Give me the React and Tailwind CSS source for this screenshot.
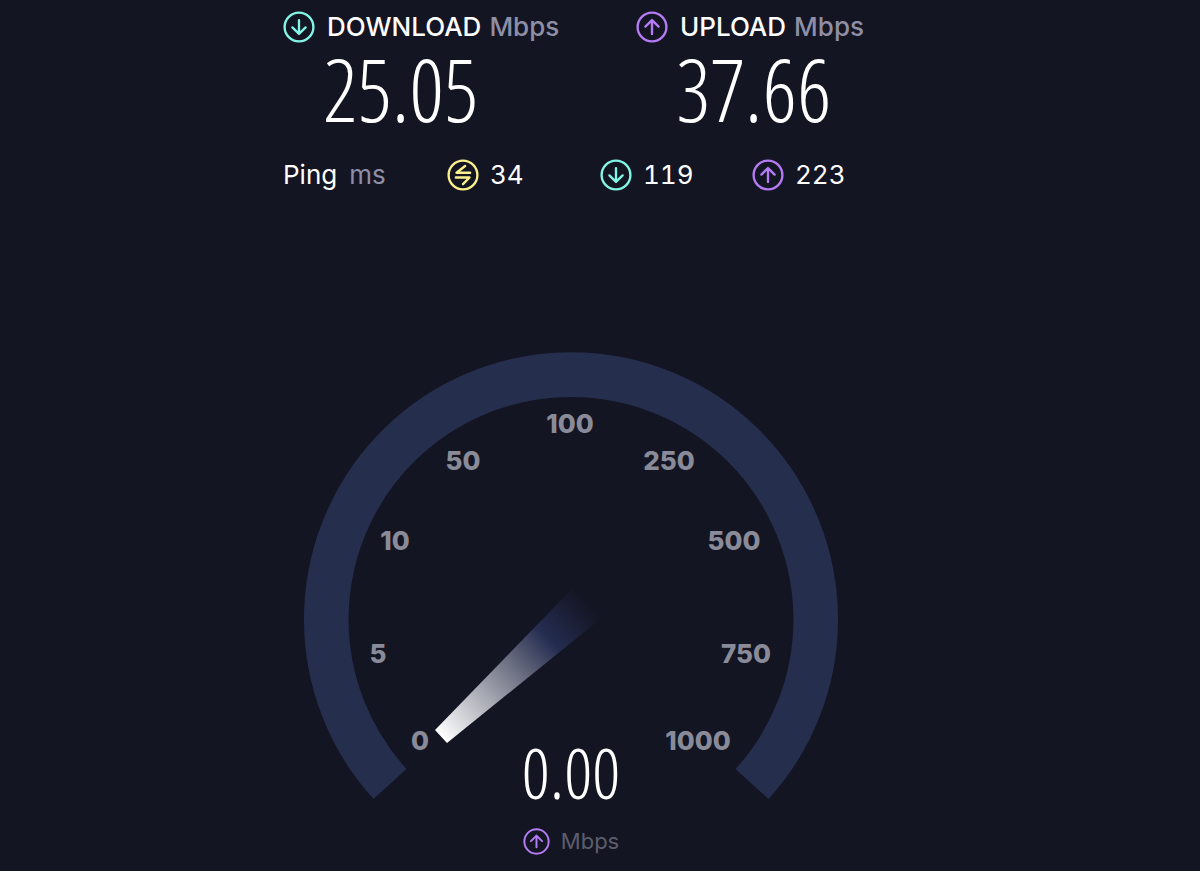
const ICON_PATHS = {
  down: 'M15 8.5V21M8.8 15.4L15 21.5L21.2 15.4',
  up: 'M15 21.5V9M8.8 14.6L15 8.5L21.2 14.6',
  swap: 'M17 6.6L8.9 12.9H21.7M8.3 17.3H21.1L15 23.6',
};

function CircleIcon({ kind, className }) {
  return (
    <svg viewBox="0 0 30 30" fill="none" stroke="currentColor" aria-hidden="true" className={className}>
      <circle cx="15" cy="15" r="13.5" strokeWidth="2.2" />
      <path d={ICON_PATHS[kind]} strokeWidth="2.2" strokeLinecap="round" strokeLinejoin="round" />
    </svg>
  );
}

function Result({ kind, color, label, value }) {
  return (
    <section>
      <h2 className="flex h-8 items-center text-[26px] leading-8 font-medium">
        <CircleIcon kind={kind} className={`mr-3 size-8 shrink-0 ${color}`} />
        <span>{label}</span>
        <span className="ml-2 text-[#8e8fa6]">Mbps</span>
      </h2>
      <p className="ml-10 h-[92px] font-['Open_Sans_Condensed_Light','Open_Sans_Light_Condensed','Noto_Sans_Condensed','Roboto_Condensed',sans-serif] text-[86px] leading-[92px] font-light">
        {value}
      </p>
    </section>
  );
}

function Ping({ kind, color, value }) {
  return (
    <div className="flex items-center gap-[11px]">
      <CircleIcon kind={kind} className={`size-8 shrink-0 ${color}`} />
      <span>{value}</span>
    </div>
  );
}

const TICKS = [
  { label: '0', x: 116, y: 388 },
  { label: '5', x: 74, y: 301 },
  { label: '10', x: 91, y: 188 },
  { label: '50', x: 159, y: 108 },
  { label: '100', x: 266, y: 71 },
  { label: '250', x: 365, y: 108 },
  { label: '500', x: 430, y: 188 },
  { label: '750', x: 442, y: 301 },
  { label: '1000', x: 394, y: 388 },
];

function Gauge() {
  return (
    <svg viewBox="0 0 534 448" className="col-start-1 row-start-1 w-full" role="img" aria-label="Speed gauge">
      <defs>
        <linearGradient id="needle" gradientUnits="userSpaceOnUse" x1="137" y1="385" x2="284" y2="250">
          <stop offset="0" stopColor="#ffffff" />
          <stop offset="0.12" stopColor="#dcdde0" />
          <stop offset="0.5" stopColor="#6d7082" />
          <stop offset="0.73" stopColor="#242c50" />
          <stop offset="1" stopColor="#242c50" stopOpacity="0" />
        </linearGradient>
      </defs>
      <path d="M86 432A244.7 244.7 0 1 1 448 432" fill="none" stroke="#252e4c" strokeWidth="44.6" />
      <path d="M131 378L268 237L300 264L143 391Z" fill="url(#needle)" />
      <g fill="#8a8b98" fontSize="26" fontWeight="800" textAnchor="middle" dominantBaseline="central">
        {TICKS.map((tick) => (
          <text key={tick.label} x={tick.x} y={tick.y}>
            {tick.label}
          </text>
        ))}
      </g>
    </svg>
  );
}

export default function App() {
  return (
    <main className="min-h-screen bg-[#141523] pt-[11px] pr-[58px] font-['Inter','Liberation_Sans',sans-serif] text-white">
      <div className="mx-auto max-w-xl">
        <div className="grid grid-cols-[353px_auto]">
          <Result kind="down" color="text-[#82f5e6]" label="DOWNLOAD" value="25.05" />
          <Result kind="up" color="text-[#b57bf5]" label="UPLOAD" value="37.66" />
        </div>
        <div className="mt-6 grid grid-cols-[164px_153px_152px_auto] items-center text-[26px] leading-8 tabular-nums">
          <div className="flex gap-3">
            <span>Ping</span>
            <span className="text-[#8e8fa6]">ms</span>
          </div>
          <Ping kind="swap" color="text-[#fbf08c]" value="34" />
          <Ping kind="down" color="text-[#82f5e6]" value="119" />
          <Ping kind="up" color="text-[#b57bf5]" value="223" />
        </div>
        <div className="mx-auto mt-[161px] grid max-w-[534px]">
          <Gauge />
          <p className="col-start-1 row-start-1 self-end justify-self-center font-['Open_Sans_Condensed_Light','Open_Sans_Light_Condensed','Noto_Sans_Condensed','Roboto_Condensed',sans-serif] text-[70px] leading-[56px] font-light">
            0.00
          </p>
        </div>
        <div className="mt-[27px] flex items-center justify-center gap-[11px] text-[22px] leading-7 text-[#5c5d6c]">
          <CircleIcon kind="up" className="size-[27px] text-[#b57bf5]" />
          <span>Mbps</span>
        </div>
      </div>
    </main>
  );
}
